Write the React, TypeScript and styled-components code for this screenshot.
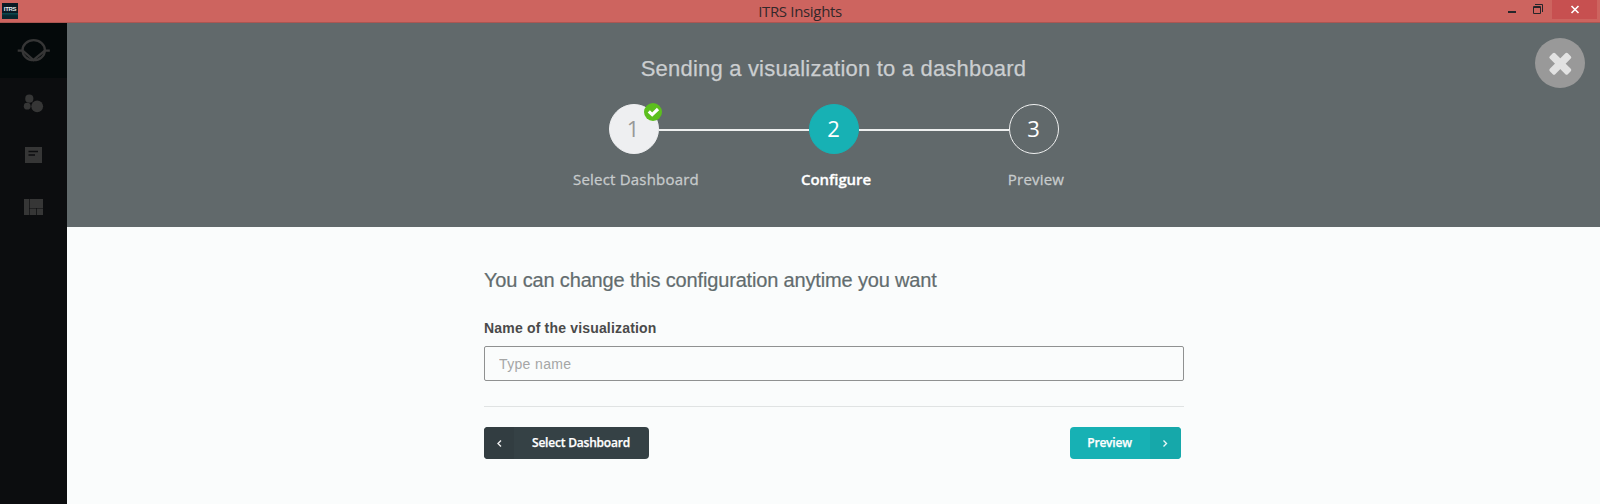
import React from "react";
import styled, { createGlobalStyle } from "styled-components";

const GlobalStyle = createGlobalStyle`
  * { box-sizing: border-box; }
  body { margin: 0; background: #fafcfc; overflow: hidden; }
  svg { display: block; }
`;

const sans = `"Liberation Sans", Arial, sans-serif`;
const open = `"Open Sans", "Noto Sans", sans-serif`;

const Window = styled.div`
  height: 504px;
  display: flex;
  flex-direction: column;
`;

const TitleBar = styled.div`
  height: 23px;
  flex: none;
  display: grid;
  grid-template-columns: 200px 1fr 200px;
  align-items: start;
  background: #cd645f;
  border-bottom: 1px solid #ab5652;
`;

const AppIcon = styled.div`
  width: 16px;
  height: 16px;
  margin: 3px 0 0 2px;
  background: linear-gradient(#0a1a24 60%, #0c4a50 64%, #08262e 80%);
  color: #e4eaec;
  font: bold 6px/11px ${sans};
  letter-spacing: -0.3px;
  padding-top: 1px;
  text-align: center;
`;

const WindowTitle = styled.div`
  text-align: center;
  font: 15px/22px ${open};
  letter-spacing: -0.33px;
  color: #33282a;
`;

const WindowButtons = styled.div`
  display: flex;
  justify-content: flex-end;
  padding-right: 3px;
  height: 19px;
`;

const WindowButton = styled.div<{ $close?: boolean }>`
  width: ${(p) => (p.$close ? 45 : 26)}px;
  height: 19px;
  display: flex;
  align-items: center;
  justify-content: center;
  background: ${(p) => (p.$close ? "#c75050" : "transparent")};
`;

const Body = styled.div`
  flex: 1;
  display: flex;
  min-height: 0;
`;

const Sidebar = styled.nav`
  width: 67px;
  flex: none;
  background: #0c0d0f;
`;

const SideItem = styled.div<{ $logo?: boolean }>`
  height: ${(p) => (p.$logo ? 55 : 52)}px;
  display: flex;
  align-items: center;
  justify-content: center;
  color: #363636;
  background: ${(p) => (p.$logo ? "#04090a" : "transparent")};
`;

const Main = styled.main`
  flex: 1;
  display: flex;
  flex-direction: column;
`;

const Header = styled.header`
  height: 204px;
  flex: none;
  display: grid;
  grid-template-columns: 100px 1fr 68px;
  background: #61696b;
`;

const Wizard = styled.div`
  grid-column: 2;
  display: flex;
  flex-direction: column;
  align-items: center;
  padding-right: 32px;
`;

const Heading = styled.h1`
  margin: 33px 0 0;
  font: 22px/26px ${sans};
  color: #cbced0;
  letter-spacing: 0.2px;
  -webkit-text-stroke: 0.25px #cbced0;
  white-space: nowrap;
`;

const Steps = styled.div`
  display: flex;
  width: 450px;
  margin-top: 22px;
`;

const Step = styled.div`
  width: 50px;
  display: flex;
  flex-direction: column;
  align-items: center;
`;

type StepState = "done" | "current" | "todo";
const circleFill = { done: "#eeeff1", current: "#17b1b4", todo: "transparent" };

const StepCircle = styled.div<{ $state: StepState }>`
  position: relative;
  width: 50px;
  height: 50px;
  border-radius: 50%;
  border: 1px solid ${(p) => (p.$state === "todo" ? "#f0f1f1" : circleFill[p.$state])};
  background: ${(p) => circleFill[p.$state]};
  color: ${(p) => (p.$state === "done" ? "#989898" : "#fff")};
  font: 22px/47px ${open};
  text-align: center;
  padding-right: ${(p) => (p.$state === "done" ? 1 : 0)}px;
`;

const DoneBadge = styled.span`
  position: absolute;
  top: -2px;
  right: -4px;
  width: 18px;
  height: 18px;
  border-radius: 50%;
  background: #5cbf1e;
`;

const StepLabel = styled.div<{ $state: StepState }>`
  margin: 14px 0 0 5px;
  font: ${(p) => (p.$state === "current" ? 600 : 400)} 15px/22px ${open};
  color: ${(p) => (p.$state === "current" ? "#fff" : "#c7cbcc")};
  -webkit-text-stroke: 0.3px ${(p) => (p.$state === "current" ? "#fff" : "#c7cbcc")};
  letter-spacing: ${(p) => (p.$state === "current" ? -0.1 : 0.2)}px;
  white-space: nowrap;
`;

const Connector = styled.div`
  width: 150px;
  height: 2px;
  margin-top: 25px;
  background: #edefef;
`;

const CloseButton = styled.div`
  grid-column: 3;
  width: 50px;
  height: 50px;
  margin: 15px 0 0 3px;
  border-radius: 50%;
  background: #999;
`;

const Form = styled.section`
  width: 700px;
  margin-left: 417px;
  padding-top: 40px;
`;

const Intro = styled.h2`
  margin: 0;
  font: 20px/26px ${sans};
  letter-spacing: -0.16px;
  -webkit-text-stroke: 0.2px #626c6e;
  color: #626c6e;
  white-space: nowrap;
`;

const Label = styled.label`
  display: block;
  margin-top: 26px;
  font: bold 14px/18px ${sans};
  letter-spacing: 0.18px;
  color: #4a4a4a;
`;

const NameInput = styled.input`
  display: block;
  width: 700px;
  height: 35px;
  margin-top: 9px;
  padding: 0 14px;
  border: 1px solid #8f9191;
  border-radius: 2px;
  background: transparent;
  font: 14px ${sans};
  letter-spacing: 0.35px;
  &::placeholder { color: #a5a6a6; opacity: 1; }
`;

const Actions = styled.div`
  display: flex;
  justify-content: space-between;
  margin-top: 25px;
  padding: 20px 3px 0 0;
  border-top: 1px solid #e0e3e3;
`;

const Button = styled.button<{ $primary?: boolean }>`
  display: flex;
  width: ${(p) => (p.$primary ? 111 : 165)}px;
  height: 32px;
  padding: 0;
  border: 0;
  border-radius: 4px;
  overflow: hidden;
  background: ${(p) => (p.$primary ? "#17b1b4" : "#354145")};
  color: #fff;
  font: 600 12px/32px ${open};
  letter-spacing: -0.2px;
  -webkit-text-stroke: 0.25px #fff;
`;

const ButtonText = styled.span<{ $shift?: number }>`
  flex: 1;
  text-align: center;
  padding-right: ${(p) => p.$shift ?? 0}px;
  white-space: nowrap;
`;

const ButtonArrow = styled.span<{ $primary?: boolean }>`
  width: ${(p) => (p.$primary ? 31 : 30)}px;
  height: 32px;
  display: flex;
  align-items: center;
  justify-content: center;
  background: ${(p) => (p.$primary ? "#16a8aa" : "#323d41")};
`;

const steps: { n: number; label: string; state: StepState }[] = [
  { n: 1, label: "Select Dashboard", state: "done" },
  { n: 2, label: "Configure", state: "current" },
  { n: 3, label: "Preview", state: "todo" },
];

export default function App() {
  return (
    <Window>
      <GlobalStyle />
      <TitleBar>
        <AppIcon>ITRS</AppIcon>
        <WindowTitle>ITRS Insights</WindowTitle>
        <WindowButtons>
          <WindowButton>
            <svg width="26" height="19"><path d="M8 11h8v2H8z" fill="#26262a" /></svg>
          </WindowButton>
          <WindowButton>
            <svg width="26" height="19" fill="none" stroke="#26262a">
              <path d="M7.5 6.500h7v7h-7zM7 7.500h8M9 4.500h7.500V12" />
            </svg>
          </WindowButton>
          <WindowButton $close>
            <svg width="45" height="19"><path d="M19.500 6l7 7M26.500 6l-7 7" stroke="#fff" strokeWidth="1.600" /></svg>
          </WindowButton>
        </WindowButtons>
      </TitleBar>
      <Body>
        <Sidebar>
          <SideItem $logo>
            <svg width="67" height="55" fill="none" stroke="currentColor" strokeWidth="2.300">
              <ellipse cx="33.700" cy="27.200" rx="11.200" ry="10" />
              <path d="M17.700 27.700h5l10.800 9.300L44.800 27.700h5" />
            </svg>
          </SideItem>
          <SideItem>
            <svg width="67" height="52" fill="currentColor">
              <circle cx="29.300" cy="20.700" r="4.100" />
              <circle cx="27.200" cy="28.200" r="3.400" />
              <circle cx="37.200" cy="28.300" r="5.900" />
            </svg>
          </SideItem>
          <SideItem>
            <svg width="67" height="52">
              <path d="M25 17h17v16H25z" fill="currentColor" />
              <path d="M28.500 21.500h9.500M28.500 25h6.500" stroke="#0c0d0f" strokeWidth="1.300" />
            </svg>
          </SideItem>
          <SideItem>
            <svg width="67" height="52" fill="currentColor">
              <path d="M24 17h5v16h-5zM29.600 17H43v9H29.600zM29.600 26.600h6.700V33h-6.700zM37 26.600h6V33h-6z" />
            </svg>
          </SideItem>
        </Sidebar>
        <Main>
          <Header>
            <Wizard>
              <Heading>Sending a visualization to a dashboard</Heading>
              <Steps>
                {steps.map((s, i) => (
                  <React.Fragment key={s.n}>
                    {i > 0 && <Connector />}
                    <Step>
                      <StepCircle $state={s.state}>
                        {s.n}
                        {s.state === "done" && (
                          <DoneBadge>
                            <svg width="18" height="18" fill="none" stroke="#fff" strokeWidth="3.200">
                              <path d="M4.800 8.300l3.400 3.300 5.800-5.600" />
                            </svg>
                          </DoneBadge>
                        )}
                      </StepCircle>
                      <StepLabel $state={s.state}>{s.label}</StepLabel>
                    </Step>
                  </React.Fragment>
                ))}
              </Steps>
            </Wizard>
            <CloseButton>
              <svg width="50" height="50" fill="#e2e2e2">
                <g transform="rotate(45 25.300 25.700)">
                  <rect x="12.600" y="21.900" width="25.400" height="7.600" rx="1.700" />
                  <rect x="21.500" y="13" width="7.600" height="25.400" rx="1.700" />
                </g>
              </svg>
            </CloseButton>
          </Header>
          <Form>
            <Intro>You can change this configuration anytime you want</Intro>
            <Label htmlFor="name">Name of the visualization</Label>
            <NameInput id="name" placeholder="Type name" />
            <Actions>
              <Button>
                <ButtonArrow>
                  <svg width="30" height="32" fill="none" stroke="#eee" strokeWidth="1.400"><path d="M17 13.500l-3 3 3 3" /></svg>
                </ButtonArrow>
                <ButtonText $shift={1}>Select Dashboard</ButtonText>
              </Button>
              <Button $primary>
                <ButtonText $shift={1}>Preview</ButtonText>
                <ButtonArrow $primary>
                  <svg width="31" height="32" fill="none" stroke="#e8f7f7" strokeWidth="1.400"><path d="M13.500 13.500l3 3-3 3" /></svg>
                </ButtonArrow>
              </Button>
            </Actions>
          </Form>
        </Main>
      </Body>
    </Window>
  );
}
